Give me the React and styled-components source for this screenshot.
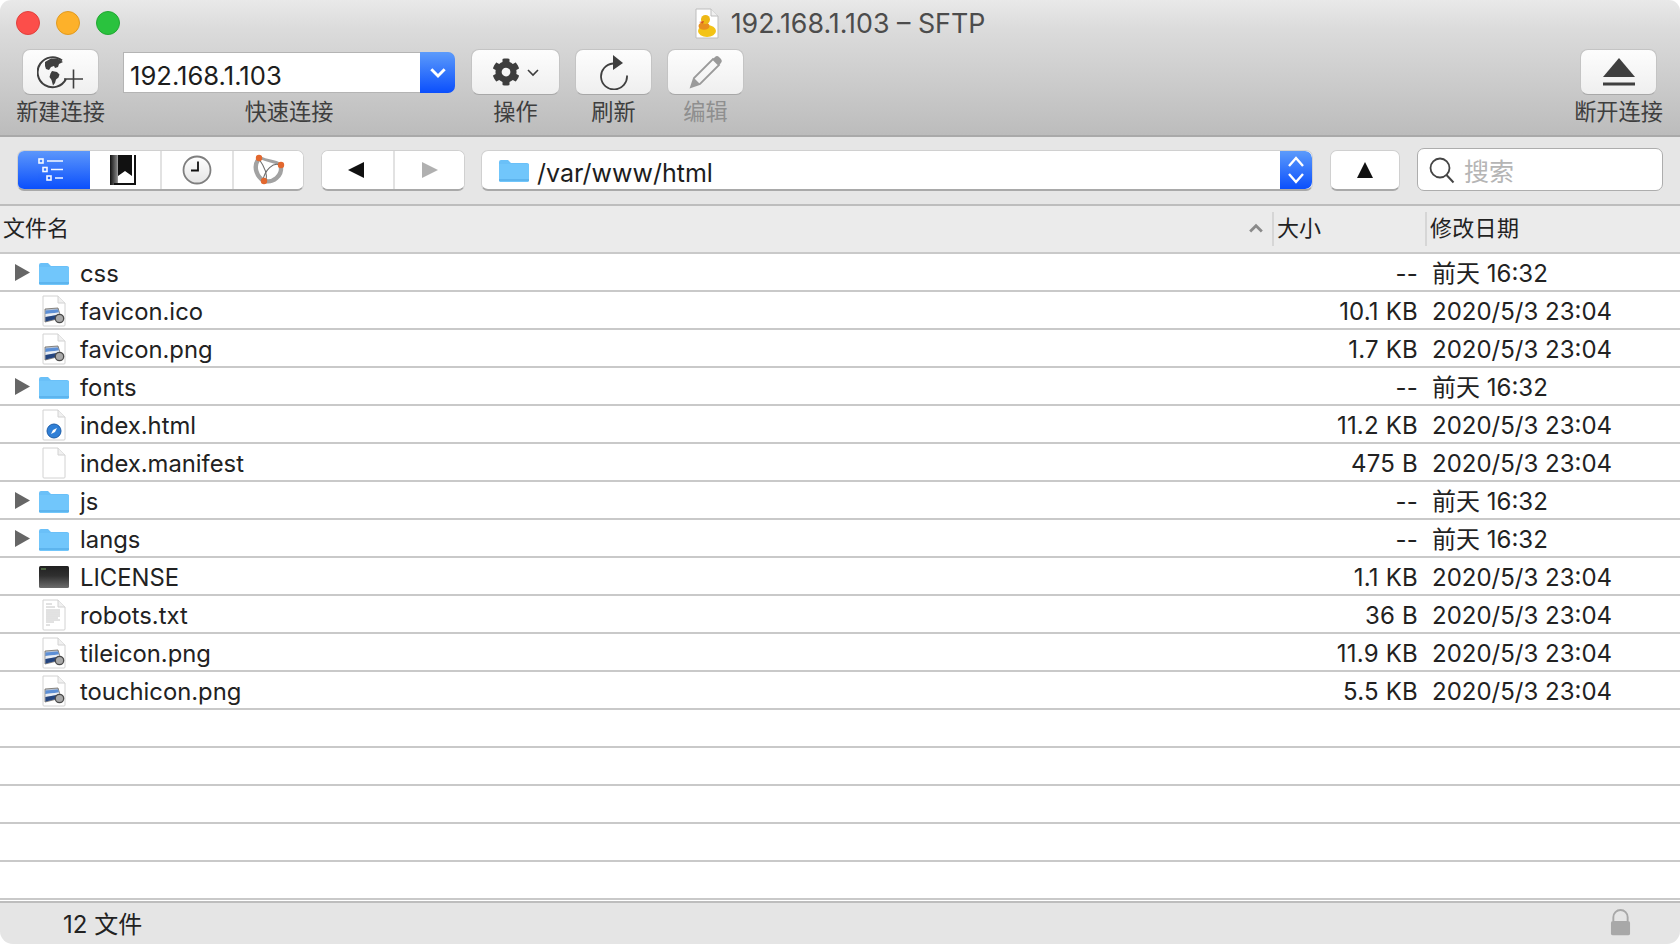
import React from 'react';
import styled, { createGlobalStyle } from 'styled-components';
import { FaCog } from 'react-icons/fa';

const FONT = `Inter, "Noto Sans CJK SC", sans-serif`;
const LINE = '#c9c9c9';

const FILES = [
  { name: 'css', kind: 'folder', size: '--', date: '前天 16:32' },
  { name: 'favicon.ico', kind: 'image', size: '10.1 KB', date: '2020/5/3 23:04' },
  { name: 'favicon.png', kind: 'image', size: '1.7 KB', date: '2020/5/3 23:04' },
  { name: 'fonts', kind: 'folder', size: '--', date: '前天 16:32' },
  { name: 'index.html', kind: 'html', size: '11.2 KB', date: '2020/5/3 23:04' },
  { name: 'index.manifest', kind: 'blank', size: '475 B', date: '2020/5/3 23:04' },
  { name: 'js', kind: 'folder', size: '--', date: '前天 16:32' },
  { name: 'langs', kind: 'folder', size: '--', date: '前天 16:32' },
  { name: 'LICENSE', kind: 'terminal', size: '1.1 KB', date: '2020/5/3 23:04' },
  { name: 'robots.txt', kind: 'text', size: '36 B', date: '2020/5/3 23:04' },
  { name: 'tileicon.png', kind: 'image', size: '11.9 KB', date: '2020/5/3 23:04' },
  { name: 'touchicon.png', kind: 'image', size: '5.5 KB', date: '2020/5/3 23:04' },
];

const GlobalStyle = createGlobalStyle`
  html, body {
    margin: 0;
    background: #fff;
  }
  body {
    font-family: ${FONT};
    color: #222;
  }
`;

const Window = styled.div`
  height: 944px;
  display: flex;
  flex-direction: column;
  overflow: hidden;
  background: #fff;
  border-radius: 11px 11px 13px 13px;
`;

const Header = styled.header`
  height: 135px;
  flex: none;
  border-bottom: 2px solid #a9a9a9;
  background: linear-gradient(#e9e9e9, #dcdcdc 20%, #bcbcbc);
`;

const TitleRow = styled.div`
  height: 49px;
  display: grid;
  grid-template-columns: 1fr auto 1fr;
  align-items: center;
  padding: 0 16px;
`;

const Lights = styled.div`
  display: flex;
  gap: 16px;
  margin-top: -4px;
`;

const Light = styled.span`
  width: 24px;
  height: 24px;
  border-radius: 50%;
  box-sizing: border-box;
  background: ${p => p.color};
  border: 1px solid ${p => p.edge};
`;

const Title = styled.div`
  display: flex;
  align-items: center;
  gap: 12px;
  font-size: 26.8px;
  color: #4c4c4c;
  line-height: 30px;
  margin-top: -3px;
`;

const ToolRow = styled.div`
  display: flex;
  padding: 0 17px 0 16px;
`;

const ToolItem = styled.div`
  display: flex;
  flex-direction: column;
  align-items: center;
  width: ${p => p.width}px;
  margin-left: ${p => p.gap || 0}px;
  ${p => p.push && 'margin-left: auto;'}
`;

const ToolButton = styled.div`
  width: 77px;
  height: 46px;
  box-sizing: border-box;
  display: flex;
  align-items: center;
  justify-content: center;
  border-radius: 8px;
  border: 1px solid #c4c4c4;
  border-bottom-color: #a8a8a8;
  background: linear-gradient(#fdfdfd, #efefef);
`;

const WideButton = styled(ToolButton)`
  width: 89px;
  gap: 7px;
`;

const ToolLabel = styled.div`
  margin-top: 2px;
  font-size: 22.2px;
  line-height: 30px;
  white-space: nowrap;
  color: ${p => (p.disabled ? '#8f8f8f' : '#3e3e3e')};
`;

const ComboSlot = styled.div`
  height: 46px;
  display: flex;
  align-items: center;
  width: 100%;
`;

const Combo = styled.div`
  width: 100%;
  height: 41px;
  display: flex;
  border-radius: 0 7px 7px 0;
  background: #fff;
  box-shadow: inset 0 0 0 1px #b4b4b4;
`;

const ComboText = styled.div`
  flex: 1;
  padding: 3px 0 0 7px;
  font-size: 25.6px;
  line-height: 41px;
  color: #1d1d1d;
`;

const BlueCap = styled.div`
  width: ${p => p.width}px;
  display: flex;
  align-items: center;
  justify-content: center;
  border-radius: 0 7px 7px 0;
  background: linear-gradient(#5c9bfb, #0b4ffc);
`;

const SubBar = styled.div`
  height: 54px;
  flex: none;
  display: flex;
  align-items: flex-end;
  padding: 0 17px 13px;
  background: #e6e6e6;
  border-bottom: 2px solid #bdbdbd;
`;

const Group = styled.div`
  height: 41px;
  box-sizing: border-box;
  display: flex;
  flex: none;
  margin-left: ${p => p.gap || 0}px;
  background: #fff;
  border-radius: 7px;
  border: 1px solid #d0d0d0;
  border-bottom: 2px solid #a9a9a9;
  overflow: hidden;
`;

const Segment = styled.div`
  width: ${p => p.width}px;
  box-sizing: border-box;
  display: flex;
  align-items: center;
  justify-content: center;
  padding-right: ${p => p.pad || 0}px;
  border-left: ${p => (p.first ? 'none' : '2px solid #e2e2e2')};
  background: ${p => (p.active ? 'linear-gradient(#5c97fb, #0b4ffc)' : '#fff')};
`;

const PathBox = styled(Group)`
  flex: 1;
`;

const PathText = styled.div`
  flex: 1;
  display: flex;
  align-items: center;
  gap: 7px;
  padding-left: 16px;
  font-size: 25px;
  color: #1d1d1d;
`;

const PathLabel = styled.span`
  padding-top: 5px;
`;

const SearchBox = styled.div`
  width: 246px;
  height: 43px;
  flex: none;
  box-sizing: border-box;
  margin-left: 17px;
  display: flex;
  align-items: center;
  gap: 9px;
  padding-left: 11px;
  background: #fff;
  border-radius: 7px;
  border: 1px solid #adadad;
  font-size: 25px;
  color: #b5b5b5;
`;

const ColumnBar = styled.div`
  height: 46px;
  flex: none;
  display: flex;
  align-items: center;
  background: #ebebeb;
  border-bottom: 2px solid ${LINE};
  font-size: 22px;
  color: #222;
`;

const ColumnName = styled.div`
  flex: 1;
  display: flex;
  align-items: center;
  justify-content: space-between;
  padding: 0 9px 0 3px;
  line-height: 32px;
  height: 34px;
  margin-top: -2px;
`;

const ColumnCell = styled.div`
  width: ${p => p.width}px;
  height: 34px;
  line-height: 32px;
  box-sizing: border-box;
  padding-left: 3px;
  border-left: 2px solid #d6d6d6;
  letter-spacing: ${p => p.spacing || 0}px;
`;

const Rows = styled.div`
  flex: none;
`;

const Row = styled.div`
  height: 38px;
  box-sizing: border-box;
  display: flex;
  align-items: center;
  padding-top: 2px;
  border-bottom: 2px solid ${LINE};
  font-size: 24px;
  line-height: 30px;
  color: #222;
`;

const Twisty = styled.div`
  width: 39px;
  padding-left: 15px;
  margin-top: -2px;
  box-sizing: border-box;
  display: flex;
  flex: none;
`;

const IconSlot = styled.div`
  width: 41px;
  flex: none;
  display: flex;
  align-items: center;
`;

const DocShift = styled.div`
  display: flex;
  padding-left: 2px;
`;

const FileName = styled.div`
  flex: 1;
  padding-top: 2px;
  font-size: 23.8px;
`;

const FileSize = styled.div`
  width: 201px;
  padding-top: 2px;
  text-align: right;
  letter-spacing: .2px;
`;

const FileDate = styled.div`
  width: 248px;
  padding-top: 2px;
  margin-left: 14px;
`;

const Gap = styled.div`
  height: 1px;
  flex: none;
`;

const StatusBar = styled.footer`
  height: 38px;
  flex: none;
  display: flex;
  align-items: center;
  justify-content: space-between;
  padding: 0 49px 3px 63px;
  background: #e5e5e5;
  border-top: 2px solid #bdbdbd;
  font-size: 24px;
  line-height: 30px;
  color: #222;
`;

const StatusText = styled.span`
  padding-top: 6px;
`;

const DocIcon = ({ children }) => (
  <svg width="26" height="32" viewBox="0 0 26 32">
    <path d="M2 1h15l7 7v22a1 1 0 0 1-1 1H3a1 1 0 0 1-1-1z" fill="#fff" stroke="#d2d2d2" />
    <path d="M17 1v7h7" fill="#f0f0f0" stroke="#d2d2d2" />
    {children}
  </svg>
);

const ImageIcon = () => (
  <DocIcon>
    <path d="M4 14l13-1 3 10-16 4z" fill="#b9c4d4" stroke="#6f6a62" strokeWidth=".8" />
    <path d="M4.5 15.5l12.5-1 1 3-13.500 1.500z" fill="#5c8fd6" />
    <path d="M4.5 19l13.500-1.500.5 2-14 2.500z" fill="#e8edf4" />
    <path d="M4.500 22l14-2.500.8 3.500-14.800 3.500z" fill="#24457f" />
    <circle cx="18.500" cy="23.500" r="4.200" fill="#a9a9a9" stroke="#4a4a4a" strokeWidth="1.300" />
  </DocIcon>
);

const HtmlIcon = () => (
  <DocIcon>
    <circle cx="13" cy="22" r="7" fill="#2f7fd6" stroke="#1b5ca8" />
    <path d="M16 19l-2 4-4 2 2-4z" fill="#fff" />
  </DocIcon>
);

const TextIcon = () => (
  <DocIcon>
    <path
      d="M5 5h6M5 8h9M5 11h14M5 13h14M5 15h14M5 17h14M5 19h12M5 21h14M5 23h8M5 26h4"
      stroke="#c4c4c4"
      strokeWidth="1"
    />
  </DocIcon>
);

const TerminalIcon = () => (
  <svg width="30" height="24" viewBox="0 0 30 24">
    <defs>
      <linearGradient id="term" x1="0" y1="0" x2="0" y2="1">
        <stop offset="0" stopColor="#202020" />
        <stop offset=".45" stopColor="#303030" />
        <stop offset="1" stopColor="#6c6c6c" />
      </linearGradient>
    </defs>
    <rect width="30" height="22" y="1" rx="1.500" fill="url(#term)" />
    <path d="M2 4h5" stroke="#6fa05a" strokeWidth="1" />
  </svg>
);

const FolderIcon = ({ width = 30, height = 24 }) => (
  <svg width={width} height={height} viewBox="0 0 30 24">
    <path
      d="M0 4a2 2 0 0 1 2-2h7l3 3h16a2 2 0 0 1 2 2v15a2 2 0 0 1-2 2H2a2 2 0 0 1-2-2z"
      fill="#6ac0f8"
    />
    <path d="M0 6h30v16a2 2 0 0 1-2 2H2a2 2 0 0 1-2-2z" fill="#71c6fb" />
    <path d="M0 22h30" stroke="#4ba3e0" strokeWidth="1" />
  </svg>
);

const FILE_ICONS = {
  folder: FolderIcon,
  image: ImageIcon,
  html: HtmlIcon,
  blank: DocIcon,
  text: TextIcon,
  terminal: TerminalIcon,
};

const GlobeIcon = () => (
  <svg width="48" height="34" viewBox="0 0 48 34">
    <path d="M25 5.500A15 15 0 1 0 29 24" fill="none" stroke="#3f3f3f" strokeWidth="2" />
    <path
      d="M8 7l6-3.500 7 .5 5 3-4 2-1 3-3 1-1-2-3 1-2 3-3-1-1-3zM15 16l5 1 2.500 2.500-1 3-2.500 2-1 3.500-2 2.500-1.500-5.500-2-3 1-3.500z"
      fill="#3f3f3f"
    />
    <path d="M27 24h19M36.500 14.500v19" stroke="#3f3f3f" strokeWidth="1.600" />
  </svg>
);

const SmallChevron = ({ color = '#3d3d3d', size = 12, up, weight = 2 }) => (
  <svg width={size} height={size} viewBox="0 0 12 12">
    <path d={up ? 'M1 9l5-5 5 5' : 'M1 4l5 5 5-5'} fill="none" stroke={color} strokeWidth={weight} />
  </svg>
);

const RefreshIcon = () => (
  <svg width="32" height="36" viewBox="0 0 32 36">
    <path d="M15 9.500a13 13 0 1 0 14 12" fill="none" stroke="#3f3f3f" strokeWidth="1.800" />
    <path d="M15 1l10 8-10 7z" fill="#3f3f3f" />
  </svg>
);

const PencilIcon = () => (
  <svg width="36" height="36" viewBox="0 0 36 36">
    <path d="M3 33l3-9L25 5l6 6-19 19z" fill="none" stroke="#9a9a9a" strokeWidth="1.800" />
    <path d="M3 33l3-9 6 6zM27 3a3 3 0 0 1 4 0l2 2a3 3 0 0 1 0 4l-2 2-6-6z" fill="#9a9a9a" />
  </svg>
);

const EjectIcon = () => (
  <svg width="34" height="30" viewBox="0 0 34 30">
    <path d="M17 1l16 19H1z" fill="#3f3f3f" />
    <path d="M1 27h32" stroke="#3f3f3f" strokeWidth="3" />
  </svg>
);

const ListViewIcon = () => (
  <svg width="26" height="24" viewBox="0 0 26 24">
    <g fill="none" stroke="#fff" strokeWidth="1.600" opacity=".95">
      <rect x="1" y="1" width="4" height="4" />
      <rect x="5" y="9.500" width="4" height="4" />
      <rect x="9" y="18" width="4" height="4" />
      <path d="M9 3h16M13 11.500h12M17 20h8" />
    </g>
  </svg>
);

const BookmarkIcon = () => (
  <svg width="26" height="30" viewBox="0 0 26 30">
    <defs>
      <linearGradient id="book" x1="0" y1="0" x2="1" y2="0">
        <stop offset="0" stopColor="#111" />
        <stop offset=".25" stopColor="#777" />
        <stop offset=".4" stopColor="#eee" />
      </linearGradient>
    </defs>
    <rect width="26" height="30" fill="url(#book)" />
    <path d="M8 0h16v28H8z" fill="#fff" />
    <path d="M24 0h2v30H4V28h20z" fill="#111" />
    <path d="M8 0h14v21l-7-5-7 5z" fill="#111" />
  </svg>
);

const ClockIcon = () => (
  <svg width="30" height="30" viewBox="0 0 30 30">
    <defs>
      <linearGradient id="clock" x1="0" y1="0" x2="0" y2="1">
        <stop offset="0" stopColor="#fff" />
        <stop offset="1" stopColor="#e4e4e4" />
      </linearGradient>
    </defs>
    <circle cx="15" cy="15" r="13.500" fill="url(#clock)" stroke="#7f7f7f" strokeWidth="1.800" />
    <path d="M16 6.500v9h-7" fill="none" stroke="#111" strokeWidth="1.800" />
  </svg>
);

const BonjourIcon = () => (
  <svg width="32" height="32" viewBox="0 0 32 32">
    <g fill="none" stroke="#a2a2a2" strokeLinecap="round">
      <path d="M5 6C0 13 4 23 11 27" strokeWidth="4.400" />
      <path d="M28 13c1 9-8 16-16 14" strokeWidth="4.400" />
      <path d="M8 4c6 3 13 3 19 6" strokeWidth="3" />
    </g>
    <g fill="none" stroke="#6e6e6e" strokeWidth="1.100">
      <path d="M6 5c5 7 9 15 7 22" />
      <path d="M27 11C20 8 12 16 10 26" />
    </g>
    <circle cx="6" cy="4" r="3.200" fill="#e2672e" />
    <circle cx="28" cy="11" r="3.200" fill="#e2672e" />
    <circle cx="11" cy="27" r="3.200" fill="#e2672e" />
  </svg>
);

const Triangle = ({ dir = 'left', color = '#111', width = 16, height = 16 }) => (
  <svg width={width} height={height} viewBox="0 0 16 16" preserveAspectRatio="none">
    <path
      d={dir === 'left' ? 'M0 8L16 0v16z' : dir === 'right' ? 'M16 8L0 0v16z' : 'M8 0l8 16H0z'}
      fill={color}
    />
  </svg>
);

const UpDown = () => (
  <svg width="18" height="30" viewBox="0 0 18 30">
    <path d="M2 11l7-8 7 8M2 19l7 8 7-8" fill="none" stroke="#fff" strokeWidth="2.400" />
  </svg>
);

const SearchIcon = () => (
  <svg width="26" height="28" viewBox="0 0 26 28">
    <circle cx="11" cy="12" r="9.500" fill="none" stroke="#444" strokeWidth="1.800" />
    <path d="M17.500 19l7 7.500" stroke="#444" strokeWidth="2" />
  </svg>
);

const LockIcon = () => (
  <svg width="21" height="28" viewBox="0 0 22 28">
    <path d="M3.500 13V9a7.500 7.500 0 0 1 15 0v4" fill="none" stroke="#a8a8a8" strokeWidth="2" />
    <rect x="1" y="13" width="20" height="15" rx="2" fill="#a8a8a8" />
  </svg>
);

const DuckIcon = () => (
  <svg width="24" height="31" viewBox="0 0 24 31">
    <path d="M1 1h15l7 7v22H1z" fill="#fff" stroke="#bdbdbd" />
    <path d="M16 1v7h7" fill="#efefef" stroke="#bdbdbd" />
    <ellipse cx="12" cy="23" rx="9" ry="6" fill="#f3c315" />
    <ellipse cx="9" cy="18" rx="5.500" ry="3.800" fill="#e88f1e" />
    <circle cx="10.500" cy="11.500" r="4.500" fill="#eeb815" />
    <path d="M9 13l-5 1 4 1.500z" fill="#d9541e" />
  </svg>
);

const Tool = ({ label, disabled, children, ...rest }) => (
  <ToolItem width={89} {...rest}>
    {children}
    <ToolLabel disabled={disabled}>{label}</ToolLabel>
  </ToolItem>
);

const FileRow = ({ file }) => {
  if (!file) return <Row />;
  const Icon = FILE_ICONS[file.kind];
  return (
    <Row>
      <Twisty>{file.kind === 'folder' && <Triangle dir="right" color="#666" width={15} height={17} />}</Twisty>
      <IconSlot>
        {/* doc icons sit a little right of the folder ones */}
        {file.kind === 'folder' || file.kind === 'terminal' ? <Icon /> : <DocShift><Icon /></DocShift>}
      </IconSlot>
      <FileName>{file.name}</FileName>
      <FileSize>{file.size}</FileSize>
      <FileDate>{file.date}</FileDate>
    </Row>
  );
};

export default function App() {
  return (
    <>
      <GlobalStyle />
      <Window>
        <Header>
          <TitleRow>
            <Lights>
              <Light color="#fc4e4a" edge="#e0403c" />
              <Light color="#fdb12a" edge="#e09a20" />
              <Light color="#2ac23e" edge="#22a733" />
            </Lights>
            <Title>
              <DuckIcon />
              192.168.1.103 – SFTP
            </Title>
          </TitleRow>
          <ToolRow>
            <Tool label="新建连接">
              <ToolButton><GlobeIcon /></ToolButton>
            </Tool>
            <ToolItem width={332} gap={18}>
              <ComboSlot>
                <Combo>
                  <ComboText>192.168.1.103</ComboText>
                  <BlueCap width={35}><SmallChevron color="#fff" size={16} weight={2.2} /></BlueCap>
                </Combo>
              </ComboSlot>
              <ToolLabel>快速连接</ToolLabel>
            </ToolItem>
            <Tool label="操作" gap={16}>
              <WideButton><FaCog size={28} color="#3d3d3d" /><SmallChevron size={12} weight={1.6} /></WideButton>
            </Tool>
            <Tool label="刷新" width={77} gap={15}>
              <ToolButton><RefreshIcon /></ToolButton>
            </Tool>
            <Tool label="编辑" width={77} gap={15} disabled>
              <ToolButton><PencilIcon /></ToolButton>
            </Tool>
            <Tool label="断开连接" push>
              <ToolButton><EjectIcon /></ToolButton>
            </Tool>
          </ToolRow>
        </Header>

        <SubBar>
          <Group>
            <Segment width={72} first active pad={6}><ListViewIcon /></Segment>
            <Segment width={70} first pad={4}><BookmarkIcon /></Segment>
            <Segment width={72}><ClockIcon /></Segment>
            <Segment width={71}><BonjourIcon /></Segment>
          </Group>
          <Group gap={17}>
            <Segment width={71} first pad={3}><Triangle dir="left" /></Segment>
            <Segment width={71}><Triangle dir="right" color="#b0b0b0" /></Segment>
          </Group>
          <PathBox gap={16}>
            <PathText>
              <FolderIcon width={32} height={24} />
              <PathLabel>/var/www/html</PathLabel>
            </PathText>
            <BlueCap width={32}><UpDown /></BlueCap>
          </PathBox>
          <Group gap={17}>
            <Segment width={68} first><Triangle dir="up" /></Segment>
          </Group>
          <SearchBox>
            <SearchIcon />
            搜索
          </SearchBox>
        </SubBar>

        <ColumnBar>
          <ColumnName>
            文件名
            <SmallChevron up color="#8a8a8a" size={14} weight={2.4} />
          </ColumnName>
          <ColumnCell width={153}>大小</ColumnCell>
          <ColumnCell width={255} spacing={.3}>修改日期</ColumnCell>
        </ColumnBar>

        <Rows>
          {FILES.map(file => <FileRow key={file.name} file={file} />)}
          {[0, 1, 2, 3, 4].map(i => <FileRow key={i} />)}
        </Rows>
        <Gap />

        <StatusBar>
          <StatusText>12 文件</StatusText>
          <LockIcon />
        </StatusBar>
      </Window>
    </>
  );
}
